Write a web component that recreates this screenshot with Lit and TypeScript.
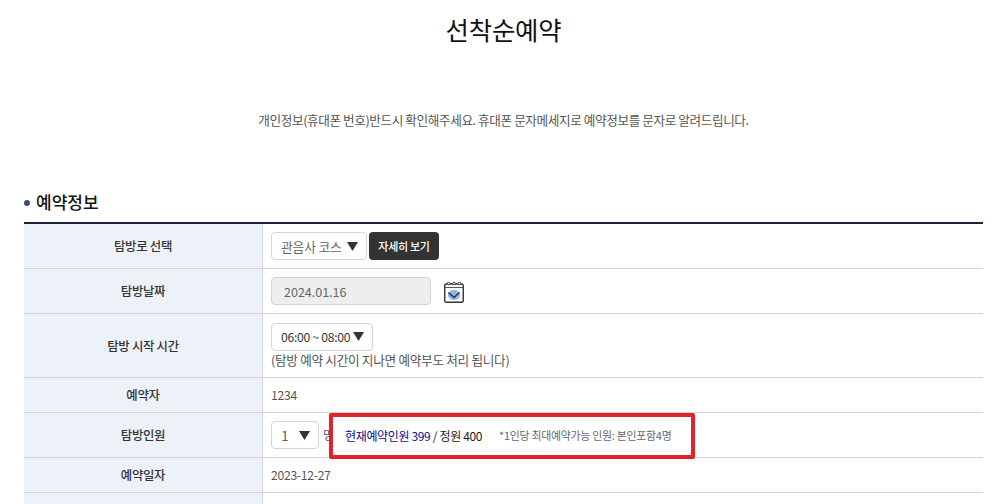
import { LitElement, html, css } from "lit";
import { customElement } from "lit/decorators.js";

const arrow = html`<svg class="arrow" viewBox="0 0 11 9" width="11" height="9"><path d="M0 0H11L5.5 9Z" fill="#333"/></svg>`;

@customElement("app-root")
export class AppRoot extends LitElement {
  static styles = css`
    :host { display: block; height: 504px; overflow: hidden; background: #fff; font-family: "Noto Sans CJK KR", "Noto Sans", sans-serif; color: #333; font-size: 12px; letter-spacing: -0.3px; }
    .wrap { padding: 0 12px 0 24px; }
    h1 { margin: 0; padding-top: 9px; height: 40px; font-size: 25.4px; line-height: 40px; font-weight: 400; text-align: center; color: #111; letter-spacing: -0.2px; }
    .notice { margin: 0; padding-top: 62px; height: 69px; line-height: 18px; text-align: center; color: #555; font-size: 12.65px; letter-spacing: -0.42px; }
    h2 { margin: 0; height: 42px; display: flex; align-items: center; gap: 6px; font-size: 17px; font-weight: 500; color: #111; letter-spacing: 0; }
    h2::before { content: ""; width: 6px; height: 6px; border-radius: 50%; background: #3b4a86; margin-top: 3px; }
    .table { border-top: 2px solid #1b2340; display: grid; grid-template-columns: 239px 1fr; grid-template-rows: 45px 45px 64px 35px 45px 35px 40px; position: relative; }
    .th, .td { border-bottom: 1px solid #d4d4d4; display: flex; box-sizing: border-box; }
    .th { background: #edf1f8; border-right: 1px solid #d4d4d4; align-items: center; justify-content: center; font-weight: 500; color: #333; font-size: 12.4px; }
    .td { padding-left: 8px; align-items: center; gap: 2px; color: #555; font-size: 12.2px; }
    .col { flex-direction: column; align-items: flex-start; gap: 0; justify-content: center; }
    .sel { box-sizing: border-box; height: 28px; border: 1px solid #d4d4d4; border-radius: 4px; display: flex; align-items: center; justify-content: space-between; padding: 0 8px 0 9px; color: #666; background: #fff; }
    .course { width: 96px; font-size: 12.8px; letter-spacing: -0.2px; }
    .time { width: 102px; color: #333; }
    .count { width: 48px; font-size: 14px; }
    .btn { height: 28px; width: 70px; border-radius: 4px; background: #333; color: #fff; display: flex; align-items: center; justify-content: center; font-size: 11px; font-weight: 500; }
    .date { box-sizing: border-box; width: 160px; height: 28px; background: #eee; border: 1px solid #d4d4d4; border-radius: 4px; display: flex; align-items: center; padding-left: 12px; color: #666; font-size: 12.5px; letter-spacing: 0; }
    .cal { margin-left: 11px; margin-top: 2px; }
    .hint { line-height: 18px; letter-spacing: -0.3px; font-size: 12.65px; }
    .unit { margin-left: 2px; }
    .red { position: absolute; left: 305px; top: 189px; width: 366px; height: 46px; box-sizing: border-box; border: 4px solid #e1222b; border-radius: 2px; background: #fff; display: flex; align-items: center; padding: 0 0 2px 12px; font-size: 12px; color: #222; letter-spacing: -0.35px; }
    .blue { color: #0c0c8c; }
    .small { margin-left: 17px; font-size: 10.9px; color: #667; letter-spacing: -0.25px; }
  `;

  render() {
    return html`
      <div class="wrap">
        <h1>선착순예약</h1>
        <p class="notice">개인정보(휴대폰 번호)반드시 확인해주세요. 휴대폰 문자메세지로 예약정보를 문자로 알려드립니다.</p>
        <h2>예약정보</h2>
        <div class="table">
          <div class="th">탐방로 선택</div>
          <div class="td"><div class="sel course">관음사 코스 ${arrow}</div><div class="btn">자세히 보기</div></div>
          <div class="th">탐방날짜</div>
          <div class="td">
            <div class="date">2024.01.16</div>
            <svg class="cal" width="20" height="22" viewBox="0 0 20 22">
              <rect x="0.75" y="3" width="18.5" height="18.25" rx="1.5" fill="#fff" stroke="#333" stroke-width="1.4"/>
              <path d="M1 6.5H19" stroke="#555" stroke-width="1"/>
              <circle cx="4.5" cy="2.5" r="1.3" fill="#fff" stroke="#333"/><circle cx="10" cy="2.5" r="1.3" fill="#fff" stroke="#333"/><circle cx="15.5" cy="2.5" r="1.3" fill="#fff" stroke="#333"/>
              <ellipse cx="10" cy="14" rx="6" ry="5" fill="#8db4e2"/>
              <path d="M4.5 11.5L10 16.5L15.5 11.5" fill="none" stroke="#26384f" stroke-width="1.6"/>
            </svg>
          </div>
          <div class="th">탐방 시작 시간</div>
          <div class="td col"><div class="sel time">06:00 ~ 08:00 ${arrow}</div><div class="hint">(탐방 예약 시간이 지나면 예약부도 처리 됩니다)</div></div>
          <div class="th">예약자</div>
          <div class="td">1234</div>
          <div class="th">탐방인원</div>
          <div class="td"><div class="sel count">1 ${arrow}</div><span class="unit">명</span></div>
          <div class="th">예약일자</div>
          <div class="td">2023-12-27</div>
          <div class="th"></div>
          <div class="td"></div>
          <div class="red"><span class="blue">현재예약인원 399</span>&nbsp;/ 정원 400<span class="small">*1인당 최대예약가능 인원: 본인포함4명</span></div>
        </div>
      </div>
    `;
  }
}
